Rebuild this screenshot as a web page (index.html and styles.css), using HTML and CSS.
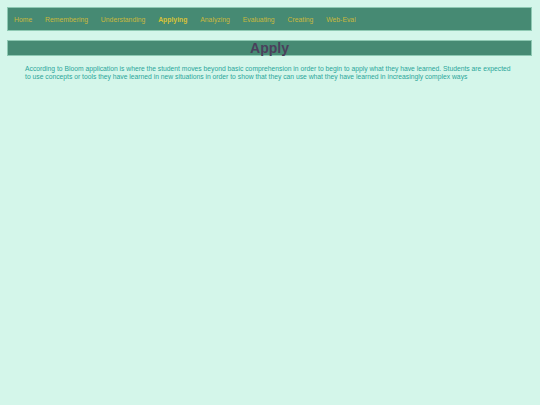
FILE: index.html
```html
<!DOCTYPE html>
<html>
<head>
<meta charset="utf-8">
<link rel="stylesheet" href="styles.css">
</head>
<body>
<nav class="nav">
  <a class="nav-link" href="#">Home</a>
  <a class="nav-link" href="#">Remembering</a>
  <a class="nav-link" href="#">Understanding</a>
  <a class="nav-link active" href="#">Applying</a>
  <a class="nav-link" href="#">Analyzing</a>
  <a class="nav-link" href="#">Evaluating</a>
  <a class="nav-link" href="#">Creating</a>
  <a class="nav-link" href="#">Web-Eval</a>
</nav>
<h1 class="title">Apply</h1>
<p class="text">According to Bloom application is where the student moves beyond basic comprehension in order to begin to apply what they have learned. Students are expected to use concepts or tools they have learned in new situations in order to show that they can use what they have learned in increasingly complex ways</p>
</body>
</html>
```
FILE: styles.css
```css
html, body {
  background: #d4f6ea;
}
body {
  margin: 7px 8px 8px 7px;
  font-family: "Liberation Sans", Arial, sans-serif;
}
.nav {
  display: flex;
  align-items: center;
  height: 22px;
  padding: 0 0 0 6px;
  background: #468a73;
  border: 1px solid #8ec9b3;
}
.nav-link {
  font-size: 6.85px;
  color: #c8b83c;
  text-decoration: none;
  margin-right: 12.8px;
}
.nav-link.active {
  font-weight: bold;
  color: #d8c237;
}
.title {
  margin: 9px 0 0 0;
  height: 14px;
  line-height: 14px;
  background: #468a73;
  border: 1px solid #8ec9b3;
  text-align: center;
  font-size: 14px;
  font-weight: bold;
  color: #4b3f5c;
}
.text {
  margin: 9px 20px 0 18px;
  font-size: 6.75px;
  line-height: 8px;
  color: #2ba69a;
}
```
